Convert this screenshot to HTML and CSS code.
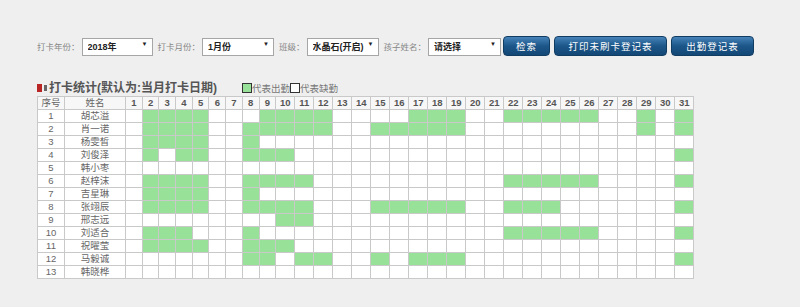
FILE: index.html
```html
<!DOCTYPE html>
<html lang="zh-CN">

<head>
    <meta charset="utf-8">
    <title>打卡统计</title>
    <link rel="stylesheet" href="styles.css">
</head>

<body>
    <div class="page">
        <form class="search-bar">
            <label class="field-label">打卡年份：</label>
            <span class="select-box w-year"><select><option>2018年</option></select></span>
            <label class="field-label">打卡月份：</label>
            <span class="select-box w-month"><select><option>1月份</option></select></span>
            <label class="field-label">班级：</label>
            <span class="select-box w-class"><select><option>水晶石(开启)</option></select></span>
            <label class="field-label">孩子姓名：</label>
            <span class="select-box w-kid"><select><option>请选择</option></select></span>
            <button type="button" class="btn btn-search">检索</button>
            <button type="button" class="btn btn-print">打印未刷卡登记表</button>
            <button type="button" class="btn btn-list">出勤登记表</button>
        </form>

        <div class="stat-head">
            <h2 class="stat-title"><span class="mark"></span>打卡统计(默认为:当月打卡日期)</h2>
            <span class="legend"><i class="swatch on"></i>代表出勤<i class="swatch off"></i>代表缺勤</span>
        </div>

        <table class="attend-table">
            <colgroup>
                <col class="c-no">
                <col class="c-name">
            </colgroup>
            <thead>
                <tr class="head-row">
                    <th class="plain">序号</th>
                    <th class="plain">姓名</th>
                </tr>
            </thead>
            <tbody class="attend-body"></tbody>
        </table>
    </div>

    <script>
        let kids = [
            { navn: "胡芯溢", dage: [2, 3, 4, 5, 9, 10, 11, 12, 17, 18, 19, 22, 23, 24, 25, 26, 29, 31] },
            { navn: "肖一诺", dage: [2, 3, 4, 5, 8, 9, 10, 11, 12, 15, 16, 17, 18, 19, 29, 31] },
            { navn: "杨雯晳", dage: [2, 3, 4, 5, 8] },
            { navn: "刘俊泽", dage: [2, 4, 5, 8, 9, 10, 31] },
            { navn: "韩小枣", dage: [] },
            { navn: "赵梓沫", dage: [2, 3, 4, 5, 8, 9, 10, 11, 22, 23, 24, 25, 26, 31] },
            { navn: "吉星琳", dage: [2, 3, 4, 5, 8] },
            { navn: "张翊辰", dage: [2, 3, 4, 5, 8, 9, 10, 11, 15, 16, 17, 18, 19, 22, 23, 24, 31] },
            { navn: "邢志远", dage: [10, 11] },
            { navn: "刘适合", dage: [2, 3, 4, 8, 22, 23, 24, 25, 26, 31] },
            { navn: "祝曜莹", dage: [2, 3, 4, 5, 8, 9, 10] },
            { navn: "马毅诚", dage: [8, 9, 11, 12, 15, 17, 18, 19, 31] },
            { navn: "韩晓桦", dage: [] }
        ];

        let cols = document.querySelector(".attend-table colgroup"),
            head = document.querySelector(".head-row"),
            body = document.querySelector(".attend-body");

        for (let d = 1; d <= 31; d++) {
            let col = document.createElement("col");
            col.className = d < 10 ? "c-day" : "c-day2";
            cols.appendChild(col);
            let th = document.createElement("th");
            th.textContent = d;
            head.appendChild(th);
        }

        kids.forEach((kid, i) => {
            let tr = document.createElement("tr");
            let no = document.createElement("td");
            no.textContent = i + 1;
            tr.appendChild(no);
            let navn = document.createElement("td");
            navn.textContent = kid.navn;
            tr.appendChild(navn);
            for (let d = 1; d <= 31; d++) {
                let td = document.createElement("td");
                if (kid.dage.includes(d)) td.className = "on";
                tr.appendChild(td);
            }
            body.appendChild(tr);
        });
    </script>
</body>

</html>
```

FILE: styles.css
```css
body {
    margin: 0;
    background-color: #efefef;
    font-family: "Liberation Sans", "Noto Sans CJK SC", sans-serif;
    color: #555;
}

.page {
    padding: 36px 0 0 37px;
}

.search-bar {
    display: flex;
    align-items: center;
    height: 20px;
}

.field-label {
    font-size: 8.5px;
    color: #888;
    margin-right: 2px;
}

.select-box {
    position: relative;
    display: inline-block;
    margin-right: 5px;
}

.select-box select {
    -webkit-appearance: none;
    appearance: none;
    width: 100%;
    height: 18px;
    padding: 0 0 0 5px;
    border: 1px solid #a6a6a6;
    border-radius: 0;
    background: #fff;
    font-family: "Liberation Sans", "Noto Sans CJK SC", sans-serif;
    font-size: 9px;
    font-weight: bold;
    color: #222;
}

.select-box::after {
    content: "▼";
    position: absolute;
    right: 5px;
    top: 5px;
    font-size: 6px;
    color: #222;
    pointer-events: none;
}

.w-year { width: 71px; }
.w-month { width: 72px; }
.w-class { width: 72px; }
.w-kid { width: 73px; margin-right: 2px; }

.btn {
    height: 20px;
    margin-right: 4px;
    padding: 0;
    border: 1px solid #123d63;
    border-radius: 4px;
    background: linear-gradient(#4683b8, #1c5689 50%, #134876);
    color: #fff;
    font-family: "Liberation Sans", "Noto Sans CJK SC", sans-serif;
    font-size: 9.5px;
    letter-spacing: 1px;
    cursor: pointer;
}

.btn-search { width: 47px; }
.btn-print { width: 113px; }
.btn-list { width: 83px; }

.stat-head {
    display: flex;
    align-items: flex-end;
    margin-top: 24px;
    height: 16px;
}

.stat-title {
    display: flex;
    align-items: center;
    margin: 0;
    font-size: 12px;
    font-weight: bold;
    color: #555;
    line-height: 16px;
}

.mark {
    width: 5px;
    height: 8px;
    margin-right: 7px;
    background-color: #b92424;
    box-shadow: 6px 0 0 -1px #666;
}

.legend {
    display: flex;
    align-items: center;
    margin-left: 25px;
    margin-bottom: 1px;
    font-size: 9.5px;
    color: #777;
}

.swatch {
    width: 8px;
    height: 8px;
    border: 1px solid #333;
}

.swatch.on {
    background-color: #98e198;
}

.swatch.off {
    background-color: #fff;
}

.attend-table {
    table-layout: fixed;
    width: 657px;
    margin-top: 0;
    border-collapse: collapse;
    background-color: #fff;
}

.c-no { width: 27px; }
.c-name { width: 61px; }
.c-day { width: 16.7px; }
.c-day2 { width: 19px; }

.attend-table th,
.attend-table td {
    height: 12px;
    padding: 0;
    border: 1px solid #c9c9c9;
    font-size: 9.5px;
    line-height: 12px;
    text-align: center;
    color: #666;
    overflow: hidden;
    white-space: nowrap;
}

.attend-table th {
    background-color: #f7f7f7;
    font-weight: bold;
    color: #555;
}

.attend-table th.plain {
    font-weight: normal;
    color: #666;
}

.attend-table td.on {
    background-color: #98e198;
}
```
